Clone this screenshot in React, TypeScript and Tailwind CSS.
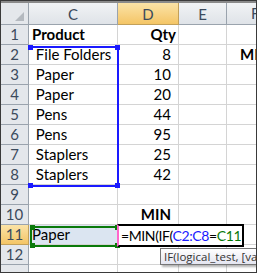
const rows: { n: number; c: string; d: string; f?: string; bold?: boolean }[] = [
  { n: 1, c: "Product", d: "Qty", bold: true },
  { n: 2, c: "\u00a0File Folders", d: "8", f: "MI" },
  { n: 3, c: "\u00a0Paper", d: "10" },
  { n: 4, c: "\u00a0Paper", d: "20" },
  { n: 5, c: "\u00a0Pens", d: "44" },
  { n: 6, c: "\u00a0Pens", d: "95" },
  { n: 7, c: "\u00a0Staplers", d: "25" },
  { n: 8, c: "\u00a0Staplers", d: "42" },
  { n: 9, c: "", d: "" },
  { n: 10, c: "", d: "MIN" },
  { n: 11, c: "Paper", d: "" },
  { n: 12, c: "", d: "" },
];

function RefBox({ color, className }: { color: string; className: string }) {
  // formula reference outline with corner handles
  const h = `absolute w-[5px] h-[5px] ${color}`;
  return (
    <div className={`absolute ${className}`}>
      <span className={`${h} -left-[2px] -top-[3px]`} />
      <span className={`${h} -right-[3px] -top-[3px]`} />
      <span className={`${h} -left-[2px] -bottom-[3px]`} />
      <span className={`${h} -right-[3px] -bottom-[3px]`} />
    </div>
  );
}

export default function App() {
  return (
    <div
      className="relative w-[257px] h-[273px] overflow-hidden bg-white border border-[#3a3a3a] text-[15px] text-black"
      style={{ fontFamily: "Lato, 'Open Sans', sans-serif" }}
    >
      {/* column headers */}
      <div className="flex h-[24px] border-t-2 border-[#8a8a8a] text-[#3b4a5c]">
        <div className="relative w-[28px] shrink-0 bg-[#e4e7eb] border-r border-b border-[#9aa3ad]">
          <span className="absolute right-[4px] bottom-[3px] w-0 h-0 border-l-[9px] border-l-transparent border-b-[9px] border-b-[#b4b9bf]" />
        </div>
        <div className="w-[89px] shrink-0 grid place-items-center bg-gradient-to-b from-[#f1f3f5] to-[#dfe3e8] border-r border-b border-[#9aa3ad]">C</div>
        <div className="w-[61px] shrink-0 grid place-items-center bg-gradient-to-b from-[#fbe3a6] to-[#f4c565] border-r border-b border-[#c2a05a]">D</div>
        <div className="w-[48px] shrink-0 grid place-items-center bg-gradient-to-b from-[#f1f3f5] to-[#dfe3e8] border-r border-b border-[#9aa3ad]">E</div>
        <div className="flex-1 pl-[24px] bg-gradient-to-b from-[#f1f3f5] to-[#dfe3e8] border-b border-[#9aa3ad] flex items-center">F</div>
      </div>

      {rows.map((r) => (
        <div key={r.n} className="flex h-[20px] leading-[19px]">
          <div
            className={`w-[28px] shrink-0 text-center text-[#3b4a5c] border-r border-b ${
              r.n === 11 ? "bg-gradient-to-b from-[#fbe3a6] to-[#f4c565] border-[#c2a05a]" : "bg-[#e4e7eb] border-[#9aa3ad]"
            }`}
          >
            {r.n}
          </div>
          <div className={`w-[89px] shrink-0 pl-[3px] whitespace-pre border-r border-b border-[#d4d4d4] ${r.bold ? "font-bold" : ""} ${r.n === 11 ? "bg-[#dbe5f1]" : ""}`}>
            {r.c}
          </div>
          <div
            className={`w-[61px] shrink-0 text-right border-r border-b border-[#d4d4d4] ${r.bold ? "font-bold pr-[2px]" : "pr-[7px]"} ${r.n === 10 ? "font-bold" : ""}`}
          >
            {r.d}
          </div>
          <div className="w-[48px] shrink-0 border-r border-b border-[#d4d4d4]" />
          <div className="flex-1 pl-[13px] font-bold whitespace-nowrap border-b border-[#d4d4d4]">{r.f ?? ""}</div>
        </div>
      ))}
      <div className="flex h-[20px]">
        <div className="w-[28px] shrink-0 bg-[#e4e7eb] border-r border-[#9aa3ad]" />
        <div className="w-[89px] shrink-0 border-r border-[#d4d4d4]" />
        <div className="w-[61px] shrink-0 border-r border-[#d4d4d4]" />
        <div className="w-[48px] shrink-0 border-r border-[#d4d4d4]" />
      </div>

      {/* range C2:C8 */}
      <RefBox color="bg-[#1a1aff]" className="left-[29px] top-[45px] w-[89px] h-[141px] border-t-2 border-r-2 border-b-2 border-[#1a1aff]" />

      {/* C11 reference */}
      <RefBox color="bg-[#0a7a0a]" className="left-[29px] top-[225px] w-[89px] h-[21px] border-2 border-[#0a7a0a]" />

      {/* edit box D11 */}
      <div className="absolute left-[116px] top-[223px] w-[127px] h-[23px] bg-white border-2 border-black border-l-[#ff66cc] text-[14px] tracking-[-0.4px] leading-[19px] pl-[2px] whitespace-nowrap">
        <span>=MIN(IF(</span>
        <span className="text-[#1a1aff]">C2:C8</span>
        <span>=</span>
        <span className="text-[#0a7a0a]">C11</span>
        <span className="inline-block w-px h-[16px] bg-black align-middle ml-[1px]" />
      </div>

      {/* tooltip */}
      <div
        className="absolute left-[159px] top-[247px] h-[17px] pl-[3px] pr-1 whitespace-nowrap text-[11.5px] leading-[15px] text-[#333] bg-gradient-to-b from-white to-[#e4e5f0] border border-[#767676] shadow-[2px_2px_2px_rgba(0,0,0,0.3)]"
        style={{ fontFamily: "'Open Sans', sans-serif" }}
      >
        IF(logical_test, [value_if_true]
      </div>
    </div>
  );
}
